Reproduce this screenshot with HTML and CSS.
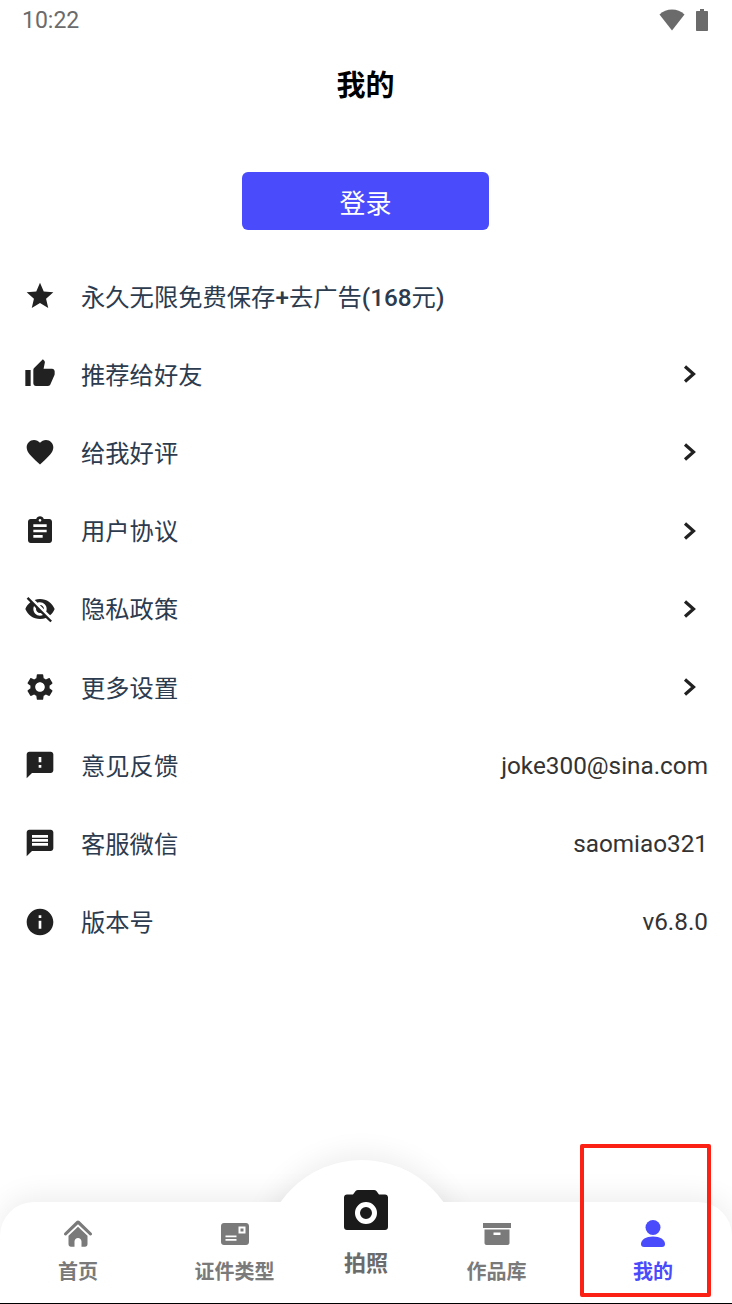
FILE: index.html
```html
<!DOCTYPE html>
<html lang="zh-CN">
<head>
  <meta charset="UTF-8">
  <meta name="viewport" content="width=device-width, initial-scale=1.0">
  <title>我的</title>
  <link rel="stylesheet" href="styles.css">
</head>
<body>
  <div class="screen">
    <div class="status-bar">
      <span class="clock">10:22</span>
      <div class="status-icons">
        <svg class="wifi" viewBox="0 0 26 22"><path d="M13 21.5 0.5 5.5C4 2.3 8.300 0.500 13 0.500s9 1.800 12.500 5z"/></svg>
        <svg class="battery" viewBox="0 0 12 22"><path d="M4 0h4v2h3c.6 0 1 .4 1 1v18c0 .6-.4 1-1 1H1c-.6 0-1-.4-1-1V3c0-.6.4-1 1-1h3z"/></svg>
      </div>
    </div>

    <h1 class="title">我的</h1>

    <div class="login-wrap">
      <button class="login">登录</button>
    </div>

    <ul class="menu">
      <li class="row">
        <svg class="icon" viewBox="0 0 24 24"><path d="M12 17.27L18.18 21l-1.64-7.03L22 9.24l-7.19-.61L12 2 9.19 8.63 2 9.24l5.46 4.73L5.82 21z"/></svg>
        <span class="label">永久无限免费保存<b>+</b>去广告<b>(168</b>元<b>)</b></span>
      </li>
      <li class="row">
        <svg class="icon" viewBox="0 0 24 24"><path d="M1 21h4V9H1v12zm22-11c0-1.100-.9-2-2-2h-6.310l.95-4.570.03-.32c0-.41-.17-.79-.44-1.060L14.170 1 7.590 7.590C7.220 7.950 7 8.450 7 9v10c0 1.100.9 2 2 2h9c.83 0 1.540-.5 1.840-1.220l3.020-7.050c.09-.23.14-.47.14-.73v-2z"/></svg>
        <span class="label">推荐给好友</span>
        <svg class="chevron" viewBox="0 0 13 18"><path d="M2 1.500 10.500 9 2 16.500"/></svg>
      </li>
      <li class="row">
        <svg class="icon" viewBox="0 0 24 24"><path d="M12 21.350l-1.450-1.320C5.400 15.360 2 12.280 2 8.500 2 5.420 4.420 3 7.500 3c1.740 0 3.410.81 4.500 2.090C13.090 3.810 14.760 3 16.500 3 19.580 3 22 5.420 22 8.500c0 3.780-3.400 6.860-8.550 11.540L12 21.350z"/></svg>
        <span class="label">给我好评</span>
        <svg class="chevron" viewBox="0 0 13 18"><path d="M2 1.500 10.500 9 2 16.500"/></svg>
      </li>
      <li class="row">
        <svg class="icon" viewBox="0 0 24 24"><path d="M19 3h-4.180C14.400 1.840 13.300 1 12 1c-1.300 0-2.400.84-2.820 2H5c-1.100 0-2 .9-2 2v14c0 1.100.9 2 2 2h14c1.100 0 2-.9 2-2V5c0-1.100-.9-2-2-2zm-7 0c.55 0 1 .45 1 1s-.45 1-1 1-1-.45-1-1 .45-1 1-1zm2 14H7v-2h7v2zm3-4H7v-2h10v2zm0-4H7V7h10v2z"/></svg>
        <span class="label">用户协议</span>
        <svg class="chevron" viewBox="0 0 13 18"><path d="M2 1.500 10.500 9 2 16.500"/></svg>
      </li>
      <li class="row">
        <svg class="icon" viewBox="0 0 24 24"><path d="M12 7c2.760 0 5 2.240 5 5 0 .65-.13 1.260-.36 1.830l2.920 2.920c1.510-1.260 2.700-2.890 3.430-4.750-1.730-4.390-6-7.500-11-7.500-1.400 0-2.740.25-3.980.7l2.160 2.160C10.740 7.130 11.350 7 12 7zM2 4.270l2.280 2.280.46.46C3.080 8.300 1.780 10.020 1 12c1.730 4.390 6 7.500 11 7.500 1.550 0 3.030-.3 4.380-.84l.42.42L19.730 22 21 20.730 3.270 3 2 4.270zM7.530 9.800l1.550 1.550c-.05.21-.08.43-.08.65 0 1.660 1.340 3 3 3 .22 0 .44-.03.65-.08l1.550 1.550c-.67.33-1.410.53-2.200.53-2.760 0-5-2.240-5-5 0-.79.2-1.530.53-2.200zm4.310-.78l3.150 3.150.02-.16c0-1.660-1.340-3-3-3l-.17.01z"/></svg>
        <span class="label">隐私政策</span>
        <svg class="chevron" viewBox="0 0 13 18"><path d="M2 1.500 10.500 9 2 16.500"/></svg>
      </li>
      <li class="row">
        <svg class="icon" viewBox="0 0 24 24"><path d="M19.140 12.940c.04-.3.06-.61.06-.94 0-.32-.02-.64-.07-.94l2.030-1.580c.18-.14.23-.41.12-.61l-1.920-3.320c-.12-.22-.37-.29-.59-.22l-2.390.96c-.5-.38-1.030-.7-1.620-.94l-.36-2.540c-.04-.24-.24-.41-.48-.41h-3.840c-.24 0-.43.17-.47.41l-.36 2.540c-.59.24-1.130.57-1.620.94l-2.390-.96c-.22-.08-.47 0-.59.22L2.740 8.870c-.12.21-.08.47.12.61l2.030 1.580c-.05.3-.09.63-.09.94s.02.64.07.94l-2.030 1.580c-.18.14-.23.41-.12.61l1.920 3.320c.12.22.37.29.59.22l2.390-.96c.5.38 1.030.7 1.620.94l.36 2.540c.05.24.24.41.48.41h3.840c.24 0 .44-.17.47-.41l.36-2.540c.59-.24 1.130-.56 1.620-.94l2.390.96c.22.08.47 0 .59-.22l1.920-3.320c.12-.22.07-.47-.12-.61l-2.010-1.580zM12 15.600c-1.980 0-3.600-1.620-3.600-3.600s1.620-3.600 3.600-3.600 3.600 1.620 3.600 3.600-1.620 3.600-3.600 3.600z"/></svg>
        <span class="label">更多设置</span>
        <svg class="chevron" viewBox="0 0 13 18"><path d="M2 1.500 10.500 9 2 16.500"/></svg>
      </li>
      <li class="row">
        <svg class="icon" viewBox="0 0 24 24"><path d="M20 2H4c-1.100 0-1.990.9-1.990 2L2 22l4-4h14c1.100 0 2-.9 2-2V4c0-1.100-.9-2-2-2zm-7 12h-2v-2h2v2zm0-4h-2V6h2v4z"/></svg>
        <span class="label">意见反馈</span>
        <span class="value">joke300@sina.com</span>
      </li>
      <li class="row">
        <svg class="icon" viewBox="0 0 24 24"><path d="M20 2H4c-1.100 0-1.990.9-1.990 2L2 22l4-4h14c1.100 0 2-.9 2-2V4c0-1.100-.9-2-2-2zm-2 12H6v-2h12v2zm0-3H6V9h12v2zm0-3H6V6h12v2z"/></svg>
        <span class="label">客服微信</span>
        <span class="value">saomiao321</span>
      </li>
      <li class="row">
        <svg class="icon" viewBox="0 0 24 24"><path d="M12 2C6.480 2 2 6.480 2 12s4.480 10 10 10 10-4.480 10-10S17.520 2 12 2zm1 15h-2v-6h2v6zm0-8h-2V7h2v2z"/></svg>
        <span class="label">版本号</span>
        <span class="value">v6.8.0</span>
      </li>
    </ul>

    <nav class="tabbar">
      <div class="bump"></div>
      <div class="tab">
        <svg class="tab-icon" viewBox="0 0 28 28"><path d="M14 .5c-.5 0-1 .2-1.400.6L.6 12.700c-.8.8-.8 1.700-.2 2.300s1.500.6 2.200-.1L14 4.200l11.400 10.700c.7.7 1.600.7 2.200.1s.6-1.500-.2-2.300L15.400 1.100C15 .7 14.500.5 14 .5z"/><path d="M14 6.800 4.500 15.700V24c0 1.700 1 2.700 2.500 2.700h3.500V21.500c0-1.900 1.600-3.500 3.500-3.500s3.500 1.600 3.500 3.500v5.200H21c1.500 0 2.500-1 2.500-2.700v-8.300z"/></svg>
        <span class="tab-text">首页</span>
      </div>
      <div class="tab">
        <svg class="tab-icon" viewBox="0 0 28 22"><path fill-rule="evenodd" d="M3 0h22c1.700 0 3 1.300 3 3v16c0 1.700-1.300 3-3 3H3c-1.700 0-3-1.300-3-3V3c0-1.700 1.300-3 3-3zm14.500 3.500v7h7v-7zm2 2h3v3h-3zM4.500 12.500v1.800h11v-1.800zm0 3.500v1.800h11V16z"/></svg>
        <span class="tab-text">证件类型</span>
      </div>
      <div class="tab tab-camera">
        <svg class="camera-icon" viewBox="0 0 44 40"><path fill-rule="evenodd" d="M14 0h16c1 0 1.800.4 2.400 1.100L35 4.500h6c1.700 0 3 1.300 3 3V37c0 1.700-1.300 3-3 3H3c-1.700 0-3-1.300-3-3V7.500c0-1.700 1.300-3 3-3h6l2.600-3.400C12.200.4 13 0 14 0zm8 12a11 11 0 1 0 0 22 11 11 0 0 0 0-22zm0 5a6 6 0 1 1 0 12 6 6 0 0 1 0-12z"/></svg>
        <span class="tab-text">拍照</span>
      </div>
      <div class="tab">
        <svg class="tab-icon" viewBox="0 0 28 22"><path fill-rule="evenodd" d="M0 0h28v5H0zM1.500 6.500h25V20c0 1.100-.9 2-2 2h-21c-1.100 0-2-.9-2-2zm9 3v2.500h7V9.500z"/></svg>
        <span class="tab-text">作品库</span>
      </div>
      <div class="tab tab-active">
        <svg class="tab-icon" viewBox="0 0 24 28"><circle cx="12" cy="7.500" r="7.500"/><path d="M0 24c0-4.500 5-7.500 12-7.500s12 3 12 7.500c0 2-1 3-3 3H3c-2 0-3-1-3-3z"/></svg>
        <span class="tab-text">我的</span>
      </div>
    </nav>

    <div class="highlight"></div>
  </div>
</body>
</html>
```

FILE: styles.css
```css
:root {
  --primary: #4a4cfb;
  --text: #2d3b4e;
  --icon: #212121;
  --tab-grey: #7a7a7a;
}
* { box-sizing: border-box; }
body {
  margin: 0;
  background: #fff;
  font-family: 'Roboto', 'Noto Sans CJK SC', sans-serif;
}
.screen {
  position: relative;
  width: 732px;
  height: 1304px;
  overflow: hidden;
  display: flex;
  flex-direction: column;
}
.status-bar {
  height: 40px;
  padding: 0 24px 0 22px;
  display: flex;
  align-items: center;
  justify-content: space-between;
  color: #6b6b6b;
}
.clock { font-size: 23px; }
.status-icons {
  display: flex;
  align-items: center;
  gap: 11px;
}
.status-icons svg { display: block; fill: #6b6b6b; }
.wifi { width: 26px; height: 22px; }
.battery { width: 12px; height: 22px; }
.title {
  margin: 26px 1px 0 0;
  height: 40px;
  line-height: 40px;
  text-align: center;
  font-size: 29px;
  font-weight: 700;
  color: #000;
}
.login-wrap {
  margin-top: 66px;
  padding-right: 1px;
  display: flex;
  justify-content: center;
}
.login {
  width: 247px;
  height: 58px;
  background: var(--primary);
  color: #fff;
  border: none;
  border-radius: 6px;
  font-family: inherit;
  font-size: 26px;
  padding: 0;
}
.menu {
  list-style: none;
  margin: 27px 0 0;
  padding: 0;
}
.row {
  height: 78.2px;
  padding: 0 24px;
  display: flex;
  align-items: center;
}
.icon {
  width: 32px;
  height: 32px;
  flex: none;
  fill: var(--icon);
}
.label {
  margin-left: 25px;
  padding-bottom: 2px;
  flex: 1;
  font-size: 24.3px;
  color: var(--text);
}
.label b { font-weight: 500; }
.chevron {
  width: 13px;
  height: 18px;
  margin-right: 12px;
  fill: none;
  stroke: var(--icon);
  stroke-width: 3.2;
}
.value {
  font-size: 24.3px;
  color: #333;
}
.tabbar {
  position: absolute;
  left: 0;
  right: 0;
  top: 1202px;
  height: 101px;
  background: #fff;
  border-radius: 34px 34px 0 0;
  box-shadow: 0 -6px 28px rgba(0,0,0,0.07);
  display: grid;
  grid-template-columns: 156px 157px 106px 155px 158px;
}
.bump {
  position: absolute;
  left: 262px;
  top: -42px;
  width: 200px;
  height: 200px;
  border-radius: 50%;
  background: #fff;
  box-shadow: 0 -6px 28px rgba(0,0,0,0.07);
  clip-path: inset(-40px -40px 158px -40px);
}
.tab {
  position: relative;
  display: flex;
  flex-direction: column;
  align-items: center;
  padding-top: 18px;
  fill: var(--tab-grey);
  color: var(--tab-grey);
}
.tab-icon {
  width: 28px;
  height: 28px;
  flex: none;
}
.tab-text {
  margin-top: 8px;
  font-size: 20px;
  line-height: 32px;
  font-weight: 700;
}
.tab-camera {
  padding-top: 0;
  margin-top: -12px;
  color: #6b6b6b;
}
.camera-icon {
  width: 44px;
  height: 40px;
  flex: none;
  fill: #1a1a1a;
}
.tab-camera .tab-text {
  margin-top: 18px;
  font-size: 22px;
}
.tab-active {
  fill: var(--primary);
  color: var(--primary);
}
.highlight {
  position: absolute;
  left: 580px;
  top: 1144px;
  width: 131px;
  height: 153px;
  border: 4px solid #fb2115;
  border-radius: 2px;
}
.screen::after {
  content: "";
  position: absolute;
  left: 0;
  right: 0;
  bottom: 0;
  height: 1px;
  background: #000;
}
```
